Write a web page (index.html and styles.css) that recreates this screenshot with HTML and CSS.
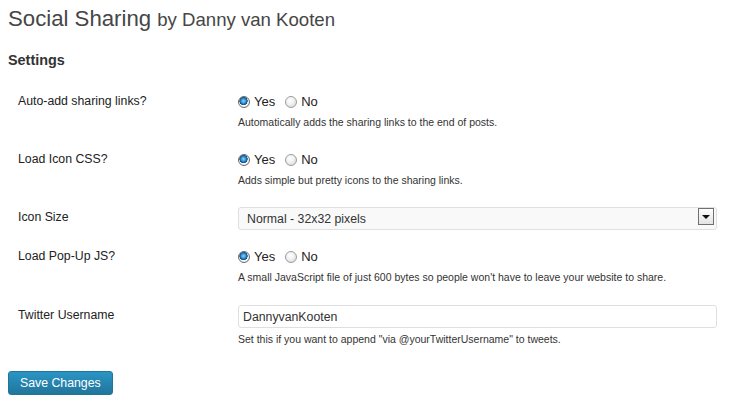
FILE: index.html
```html
<!DOCTYPE html>
<html>
<head>
  <title>Social Sharing - Settings</title>
  <link rel="stylesheet" href="styles.css">
</head>
<body>
  <div class="wrap">
    <h2 class="page-title">Social Sharing <small>by Danny van Kooten</small></h2>

    <h3 class="section-title">Settings</h3>

    <form id="settings-form" class="form-table">
      <div class="row">
        <label class="row-label">Auto-add sharing links?</label>
        <div class="row-field">
          <div class="radios">
            <label><input type="radio" name="auto_add" checked> Yes</label>
            <label><input type="radio" name="auto_add"> No</label>
          </div>
          <p class="description">Automatically adds the sharing links to the end of posts.</p>
        </div>
      </div>

      <div class="row">
        <label class="row-label">Load Icon CSS?</label>
        <div class="row-field">
          <div class="radios">
            <label><input type="radio" name="load_css" checked> Yes</label>
            <label><input type="radio" name="load_css"> No</label>
          </div>
          <p class="description">Adds simple but pretty icons to the sharing links.</p>
        </div>
      </div>

      <div class="row">
        <label class="row-label" for="icon-size">Icon Size</label>
        <div class="row-field">
          <div class="select-wrap">
            <select id="icon-size" class="wide">
              <option>Normal - 32x32 pixels</option>
              <option>Small - 16x16 pixels</option>
            </select>
            <span class="select-arrow"></span>
          </div>
        </div>
      </div>

      <div class="row">
        <label class="row-label">Load Pop-Up JS?</label>
        <div class="row-field">
          <div class="radios">
            <label><input type="radio" name="load_js" checked> Yes</label>
            <label><input type="radio" name="load_js"> No</label>
          </div>
          <p class="description">A small JavaScript file of just 600 bytes so people won't have to leave your website to share.</p>
        </div>
      </div>

      <div class="row row-last">
        <label class="row-label" for="twitter">Twitter Username</label>
        <div class="row-field">
          <input type="text" id="twitter" class="wide" value="DannyvanKooten">
          <p class="description">Set this if you want to append "via @yourTwitterUsername" to tweets.</p>
        </div>
      </div>

      <input type="submit" class="button-primary" value="Save Changes">
    </form>
  </div>
</body>
</html>
```

FILE: styles.css
```css
body {
  margin: 0;
  padding: 0;
  background-color: #FFF;
  font-family: "Liberation Sans", Arial, sans-serif;
  font-size: 12.3px;
  color: #333;
}

.wrap {
  padding: 4px 13px 0 8px;
}

.page-title {
  margin: 0;
  font-size: 22.2px;
  line-height: 29px;
  font-weight: normal;
  color: #464646;
}

.page-title small {
  font-size: 18.6px;
}

.section-title {
  margin: 17px 0 0;
  font-size: 14.4px;
  line-height: 18px;
  font-weight: bold;
  color: #333;
}

.form-table {
  margin-top: 15px;
}

.row {
  display: grid;
  grid-template-columns: 230px 1fr;
  padding: 9px 0;
}

.row-last {
  padding-top: 10px;
}

.row-label {
  padding-left: 10px;
  line-height: 16px;
  color: #222;
}

.radios {
  display: flex;
  gap: 10px;
  line-height: 18px;
  font-size: 13px;
  color: #222;
}

.radios label {
  display: flex;
  align-items: center;
}

input[type="radio"] {
  appearance: none;
  -webkit-appearance: none;
  width: 12px;
  height: 12px;
  margin: 0 4px 0 0;
  border: 1px solid #9c9c9c;
  border-radius: 50%;
  background: radial-gradient(circle at 40% 35%, #FFF 0%, #f0f0f0 45%, #cfcfcf 100%);
}

input[type="radio"]:checked {
  border-color: #6b6b6b;
  background: radial-gradient(circle at 45% 40%, #8fd3ff 0%, #2d8dcc 30%, #0d4c82 48%, #FFF 54%, #e8e8e8 75%, #b8b8b8 100%);
}

.description {
  margin: 4px 0 4px;
  font-size: 10.5px;
  line-height: 14px;
  color: #333;
}

/* select and text input share the same box */
.wide {
  display: block;
  box-sizing: border-box;
  width: 100%;
  height: 23px;
  margin: -2px 0 0;
  border: 1px solid #dfdfdf;
  border-radius: 3px;
  background-color: #FFF;
  font-family: "Liberation Sans", Arial, sans-serif;
  font-size: 12.3px;
  color: #333;
}

select.wide {
  appearance: none;
  -webkit-appearance: none;
  padding: 0 0 0 8px;
  background-color: #f9f9f9;
}

input[type="text"].wide {
  padding: 0 4px;
}

.select-wrap {
  position: relative;
}

.select-arrow {
  position: absolute;
  top: 1px;
  right: 3px;
  width: 14px;
  height: 15px;
  border: 1px solid #707070;
  background: linear-gradient(#FFF, #e3e3e3);
}

.select-arrow::after {
  content: '';
  position: absolute;
  left: 3px;
  top: 6px;
  border-left: 4px solid transparent;
  border-right: 4px solid transparent;
  border-top: 4px solid #111;
}

.button-primary {
  margin-top: 12px;
  height: 24px;
  padding: 0 11px;
  border: 1px solid #21759b;
  border-radius: 3px;
  background: linear-gradient(#2a95c5, #21759b);
  color: #FFF;
  font-family: "Liberation Sans", Arial, sans-serif;
  font-size: 12.3px;
  cursor: pointer;
}
```
